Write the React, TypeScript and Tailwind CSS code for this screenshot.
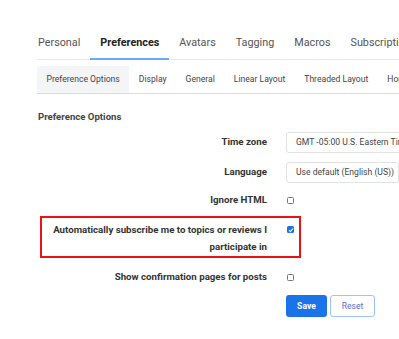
import React from "react";

const font = { fontFamily: "Roboto, 'Liberation Sans', sans-serif" };

function Check({ checked }: { checked?: boolean }) {
  if (checked) {
    return (
      <span className="inline-flex h-[7px] w-[7px] items-center justify-center rounded-[1.5px] bg-[#1a73e8]">
        <svg width="6" height="6" viewBox="0 0 6 6">
          <path d="M1 3.2 L2.4 4.6 L5 1.5" stroke="white" strokeWidth="1.1" fill="none" />
        </svg>
      </span>
    );
  }
  return <span className="inline-block h-[7px] w-[7px] rounded-[1.5px] border border-[#767676] bg-white" />;
}

export default function App() {
  const tabs = ["Personal", "Preferences", "Avatars", "Tagging", "Macros", "Subscriptions"];
  const subs = ["Preference Options", "Display", "General", "Linear Layout", "Threaded Layout", "Home"];
  return (
    <div className="h-[339px] w-[399px] overflow-hidden bg-white text-[#333]" style={font}>
      <div className="pl-[37px] pt-[34px]">
        <div className="flex whitespace-nowrap border-b border-[#e8e8e8]">
          {tabs.map((t, i) => (
            <div
              key={t}
              className={
                "relative pb-[8px] text-[10.8px] leading-[17px] " +
                (i === 0 ? "pl-[1px] pr-[10px] " : "px-[10px] ") +
                (i === 1 ? "font-bold text-[#222]" : "text-[#555]")
              }
            >
              {t}
              {i === 1 && <div className="absolute bottom-[-1px] left-0 right-0 h-[2px] bg-[#6aa8f8]" />}
            </div>
          ))}
        </div>
        <div className="mt-[6px] flex whitespace-nowrap border-b border-[#dcdcdc]">
          {subs.map((s, i) => (
            <div
              key={s}
              className={
                "h-[27px] px-[9.5px] text-[8.6px] leading-[27px] text-[#444] " + (i === 0 ? "bg-[#f4f5f7]" : "")
              }
            >
              {s}
            </div>
          ))}
        </div>
        <div className="mt-[16px] pl-[1px] text-[9.6px] font-bold leading-[14px] text-[#444]">Preference Options</div>
      </div>

      <div className="mt-[8px] flex flex-col">
        <div className="grid grid-cols-[267px_1fr] items-center gap-x-[19px]">
          <div className="text-right text-[9.7px] font-bold text-[#333]">Time zone</div>
          <div className="flex h-[21px] items-center whitespace-nowrap rounded-[3px] border border-[#e2e2e2] pl-[9px] text-[8.6px] text-[#444]">
            GMT -05:00 U.S. Eastern Time
          </div>
        </div>
        <div className="mt-[9px] grid grid-cols-[267px_1fr] items-center gap-x-[19px]">
          <div className="text-right text-[9.7px] font-bold text-[#333]">Language</div>
          <div className="flex h-[21px] items-center whitespace-nowrap rounded-[3px] border border-[#e2e2e2] pl-[9px] text-[8.6px] text-[#444]">
            Use default (English (US))
          </div>
        </div>
        <div className="mt-[7px] grid h-[20px] grid-cols-[267px_1fr] items-center gap-x-[19px]">
          <div className="text-right text-[9.7px] font-bold text-[#333]">Ignore HTML</div>
          <div className="flex items-center pl-[1px]">
            <Check />
          </div>
        </div>
        <div className="ml-[40px] mt-[6px] w-[261px] border-2 border-[#ee1111] pb-[1px] pt-[3px]">
          <div className="grid grid-cols-[225px_1fr] gap-x-[19px]">
            <div className="text-right text-[9.7px] font-bold leading-[17px] text-[#333]">
              Automatically subscribe me to topics or reviews I participate in
            </div>
            <div className="flex h-[17px] items-center pl-[1px]">
              <Check checked />
            </div>
          </div>
        </div>
        <div className="mt-[9px] grid h-[20px] grid-cols-[267px_1fr] items-center gap-x-[19px]">
          <div className="text-right text-[9.7px] font-bold text-[#333]">Show confirmation pages for posts</div>
          <div className="flex items-center pl-[1px]">
            <Check />
          </div>
        </div>
        <div className="mt-[8px] flex gap-[3px] pl-[286px]">
          <button className="h-[22px] w-[41px] rounded-[3px] bg-[#1a73e8] text-[8.6px] font-bold text-white">Save</button>
          <button className="h-[22px] w-[45px] rounded-[3px] border border-[#9cc3f5] bg-white text-[8.6px] text-[#5a6fd0]">
            Reset
          </button>
        </div>
      </div>
    </div>
  );
}
